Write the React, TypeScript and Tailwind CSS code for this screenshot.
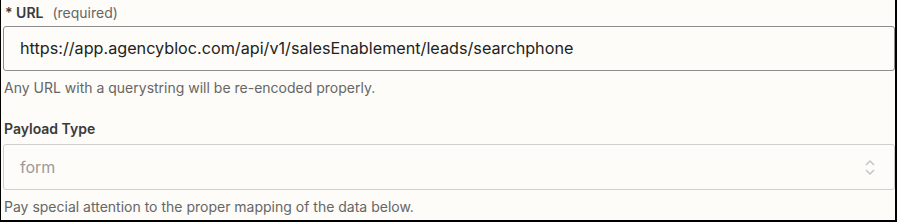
import React from "react";

export default function App() {
  return (
    <div
      className="w-[897px] h-[222px] bg-[#fdfcf8] border-l border-r-2 border-b-2 border-black flex flex-col pl-[2px] overflow-hidden"
      style={{ fontFamily: "Inter, 'Noto Sans', sans-serif" }}
    >
      {/* URL field */}
      <div className="flex items-center h-[26px] text-[14px] leading-none">
        <span className="font-semibold text-[#3a3a3a] pl-[2px]">* URL</span>
        <span className="ml-[9px] text-[#666]">(required)</span>
      </div>
      <div className="h-[45px] border border-[#8e8e8e] rounded-[3px] flex items-center pl-[16px] text-[16.2px] text-[#222]">
        https://app.agencybloc.com/api/v1/salesEnablement/leads/searchphone
      </div>
      <p className="mt-[10px] text-[14px] leading-none text-[#666] pl-[1px]">
        Any URL with a querystring will be re-encoded properly.
      </p>

      {/* Payload type */}
      <div className="mt-[27px] text-[14px] leading-none font-semibold text-[#3a3a3a] pl-[1px]">
        Payload Type
      </div>
      <div className="mt-[8px] h-[46px] border border-[#cfcfcf] rounded-[3px] flex items-center justify-between pl-[16px] pr-[19px] text-[16px] text-[#9a9a9a]">
        <span>form</span>
        <svg width="10" height="17" viewBox="0 0 10 17" fill="none" stroke="#c4c4c4" strokeWidth="1.5">
          <path d="M1 6 L5 2 L9 6" />
          <path d="M1 11 L5 15 L9 11" />
        </svg>
      </div>
      <p className="mt-[10px] text-[14px] leading-none text-[#666] pl-[1px]">
        Pay special attention to the proper mapping of the data below.
      </p>
    </div>
  );
}
